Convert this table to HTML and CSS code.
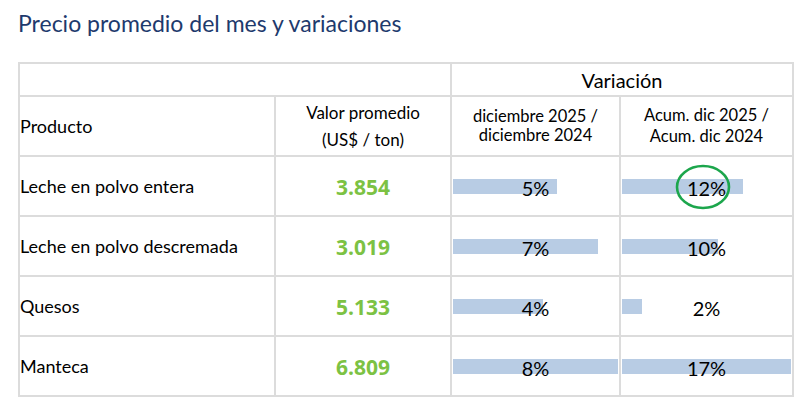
FILE: index.html
```html
<!DOCTYPE html>
<html lang="es">
<head>
<meta charset="utf-8">
<title>Precio promedio del mes y variaciones</title>
<link rel="stylesheet" href="styles.css">
</head>
<body>
<h1 class="title">Precio promedio del mes y variaciones</h1>
<table class="prices">
  <colgroup>
    <col class="c-prod"><col class="c-val"><col class="c-var1"><col class="c-var2">
  </colgroup>
  <tr class="r-top">
    <th colspan="2"></th>
    <th colspan="2" class="h-var">Variación</th>
  </tr>
  <tr class="r-head">
    <th class="h-prod">Producto</th>
    <th class="h-val">Valor promedio<br>(US$ / ton)</th>
    <th class="h-sub">diciembre 2025 /<br>diciembre 2024</th>
    <th class="h-sub h-acum">Acum. dic 2025 /<br>Acum. dic 2024</th>
  </tr>
  <tr class="r-data">
    <td class="prod">Leche en polvo entera</td>
    <td class="val">3.854</td>
    <td class="pct"><div class="cell"><div class="bar" style="width:104px"></div><span class="num">5%</span></div></td>
    <td class="pct"><div class="cell"><div class="bar" style="width:121px"></div><span class="num circled">12%<svg class="ring" width="56" height="46" viewBox="0 0 56 46"><ellipse cx="28" cy="23" rx="26" ry="21" fill="none" stroke="#1ca64c" stroke-width="2.6"/></svg></span></div></td>
  </tr>
  <tr class="r-data">
    <td class="prod">Leche en polvo descremada</td>
    <td class="val">3.019</td>
    <td class="pct"><div class="cell"><div class="bar" style="width:145px"></div><span class="num">7%</span></div></td>
    <td class="pct"><div class="cell"><div class="bar" style="width:96px"></div><span class="num">10%</span></div></td>
  </tr>
  <tr class="r-data">
    <td class="prod">Quesos</td>
    <td class="val">5.133</td>
    <td class="pct"><div class="cell"><div class="bar" style="width:90px"></div><span class="num">4%</span></div></td>
    <td class="pct"><div class="cell"><div class="bar" style="width:20px"></div><span class="num">2%</span></div></td>
  </tr>
  <tr class="r-data">
    <td class="prod">Manteca</td>
    <td class="val">6.809</td>
    <td class="pct"><div class="cell"><div class="bar" style="width:165px"></div><span class="num">8%</span></div></td>
    <td class="pct"><div class="cell"><div class="bar" style="width:169px"></div><span class="num">17%</span></div></td>
  </tr>
</table>
</body>
</html>
```

FILE: styles.css
```css
html, body {
  margin: 0;
  padding: 0;
  background: #ffffff;
}

body {
  width: 800px;
  height: 405px;
  overflow: hidden;
  font-family: Lato, "Open Sans", sans-serif;
  color: #000;
}

.title {
  margin: 0;
  padding: 9px 0 0 18px;
  height: 62px;
  box-sizing: border-box;
  font-family: Lato, sans-serif;
  font-weight: 400;
  font-size: 23px;
  line-height: 28px;
  color: #1e3a6d;
}

.prices {
  margin-left: 18px;
  border-collapse: collapse;
  table-layout: fixed;
  width: 774px;
  border: 2px solid #d6d6d6;
}

.c-prod { width: 256px; }
.c-val { width: 176px; }
.c-var1 { width: 169px; }
.c-var2 { width: 173px; }

.prices th,
.prices td {
  border: 2px solid #dcdcdc;
  padding: 0;
  font-weight: 400;
  vertical-align: middle;
}

.r-top { height: 33px; }
.r-head { height: 60px; }
.r-data { height: 60px; }

.h-var {
  font-size: 20px;
  text-align: center;
}

.h-prod {
  text-align: left;
  padding-left: 6px;
  font-size: 18px;
}

.h-val {
  font-size: 17px;
  line-height: 27px;
  text-align: center;
}

.h-sub {
  font-size: 16.5px;
  line-height: 19px;
  text-align: center;
}

.h-acum {
  line-height: 21px;
  padding-top: 6px;
}

.prod {
  padding-left: 6px;
  font-size: 18px;
}

.prices .val {
  text-align: center;
  font-family: "Open Sans", sans-serif;
  font-size: 21px;
  font-weight: 700;
  color: #7cc243;
  padding-top: 1px;
}

.cell {
  display: grid;
  align-items: center;
  height: 100%;
}

.bar,
.num {
  grid-area: 1 / 1;
}

.bar {
  justify-self: start;
  margin-left: 1px;
  height: 15px;
  background: #b8cce4;
}

.num {
  justify-self: center;
  position: relative;
  font-size: 20px;
  padding-top: 3px;
}

.ring {
  position: absolute;
  left: 50%;
  top: 50%;
  margin-left: -32px;
  margin-top: -22px;
}
```
